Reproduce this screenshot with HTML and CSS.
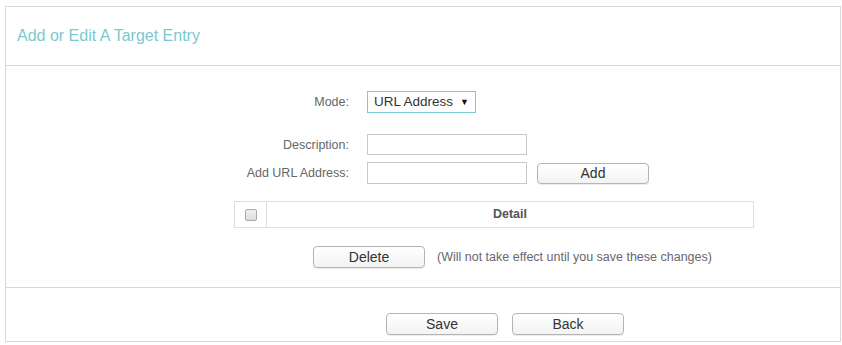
FILE: index.html
```html
<!DOCTYPE html>
<html lang="en">
<head>
    <meta charset="UTF-8">
    <title>Add or Edit A Target Entry</title>
    <link rel="stylesheet" href="styles.css">
</head>
<body>

    <div class="panel">
        <!-- Title -->
        <div class="panel-head">Add or Edit A Target Entry</div>

        <!-- Form -->
        <div class="panel-body">
            <div class="row row-mode">
                <label class="label">Mode:</label>
                <div class="select">URL Address <span class="arrow">&#9660;</span></div>
            </div>

            <div class="row row-desc">
                <label class="label">Description:</label>
                <input class="text-input" type="text">
            </div>

            <div class="row row-url">
                <label class="label">Add URL Address:</label>
                <input class="text-input" type="text">
                <button class="btn btn-add">Add</button>
            </div>

            <div class="detail-table">
                <div class="cell-check"><span class="checkbox"></span></div>
                <div class="cell-detail">Detail</div>
            </div>

            <div class="delete-row">
                <button class="btn">Delete</button>
                <span class="note">(Will not take effect until you save these changes)</span>
            </div>
        </div>

        <!-- Footer buttons -->
        <div class="panel-foot">
            <button class="btn">Save</button>
            <button class="btn">Back</button>
        </div>
    </div>

</body>
</html>
```

FILE: styles.css
```css
body {
    margin: 0;
    padding: 6px 2px 0 5px;
    font-family: "Liberation Sans", Arial, sans-serif;
    background-color: white;
    color: #666;
}

.panel {
    width: 834px;
    border: 1px solid #d9d9d9;
}

/* Title bar */
.panel-head {
    height: 58px;
    line-height: 58px;
    padding-left: 11px;
    font-size: 16px;
    color: #7cc8d0;
    border-bottom: 1px solid #d9d9d9;
}

.panel-body {
    padding: 25px 0 19px 0;
    border-bottom: 1px solid #d9d9d9;
}

.row {
    display: flex;
    align-items: center;
}

.row-desc {
    margin-top: 21px;
}

.row-url {
    margin-top: 7px;
}

.label {
    width: 343px;
    margin-right: 18px;
    text-align: right;
    font-size: 12.5px;
    color: #666;
}

.select {
    width: 101px;
    height: 20px;
    line-height: 20px;
    padding-left: 6px;
    border: 1px solid #7ccad2;
    font-size: 13.5px;
    color: #333;
    display: flex;
    justify-content: space-between;
    align-items: center;
}

.select .arrow {
    font-size: 9px;
    color: #111;
    margin-right: 6px;
}

.text-input {
    width: 156px;
    height: 17px;
    margin: 0;
    padding: 1px;
    border: 1px solid #c8c8c8;
    font-family: inherit;
}

.row-url .text-input {
    height: 18px;
}

.btn {
    width: 112px;
    height: 22px;
    padding: 0;
    border: 1px solid #b4b4b4;
    border-radius: 4px;
    background: linear-gradient(#ffffff, #f3f3f3);
    box-shadow: 0 1px 1px rgba(0, 0, 0, 0.08);
    font-family: inherit;
    font-size: 14px;
    color: #333;
}

.btn-add {
    margin-left: 10px;
    height: 21px;
}

/* Entry table */
.detail-table {
    display: flex;
    width: 518px;
    height: 25px;
    margin: 17px 0 0 228px;
    border: 1px solid #dedede;
}

.cell-check {
    width: 31px;
    border-right: 1px solid #dedede;
    display: flex;
    justify-content: center;
    align-items: center;
}

.checkbox {
    width: 10px;
    height: 10px;
    border: 1px solid #a9a9a9;
    border-radius: 2px;
    background: linear-gradient(#f2f2f2, #dcdcdc);
}

.cell-detail {
    flex: 1;
    text-align: center;
    line-height: 25px;
    font-size: 12.5px;
    font-weight: bold;
    color: #555;
}

.delete-row {
    display: flex;
    align-items: center;
    margin: 18px 0 0 307px;
}

.note {
    margin-left: 12px;
    font-size: 12.5px;
    color: #6b6570;
}

.panel-foot {
    display: flex;
    gap: 14px;
    padding: 25px 0 6px 380px;
}
```
